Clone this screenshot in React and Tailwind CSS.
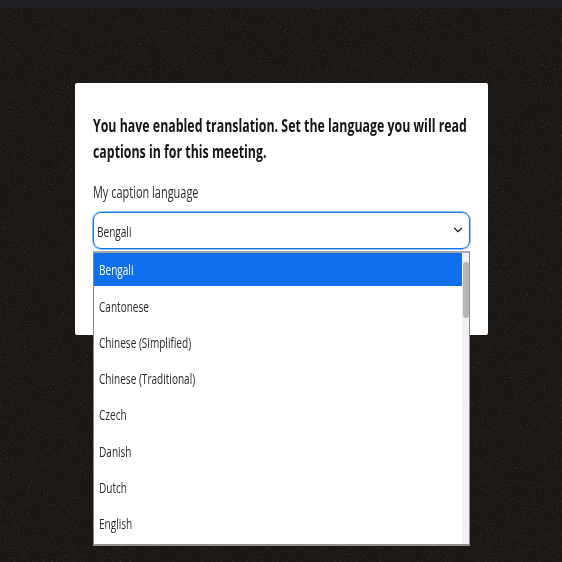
import React from "react";
import { ChevronDown } from "lucide-react";

const languages = [
  "Bengali",
  "Cantonese",
  "Chinese (Simplified)",
  "Chinese (Traditional)",
  "Czech",
  "Danish",
  "Dutch",
  "English",
];

const Squeezed = ({ children, className = "" }) => (
  <span className={`block origin-left whitespace-nowrap ${className}`}>{children}</span>
);

const App = () => {
  return (
    <div className="relative w-[562px] h-[562px] overflow-hidden bg-[#1b1714] font-['Open_Sans',sans-serif]">
      {/* background grain */}
      <svg className="absolute inset-0 w-full h-full opacity-20" xmlns="http://www.w3.org/2000/svg">
        <filter id="grain">
          <feTurbulence type="fractalNoise" baseFrequency="0.7" numOctaves="2" seed="11" />
          <feColorMatrix values="0 0 0 0 0.4  0 0 0 0 0.37  0 0 0 0 0.34  0 0 0 3 -1.75" />
        </filter>
        <rect width="562" height="562" filter="url(#grain)" />
      </svg>
      <div className="relative h-2 bg-[#1f2124]"></div>

      <div className="relative flex justify-center pt-[75px] pl-[1px]">
        <div className="relative w-[413px] h-[252px] bg-white rounded-[2px] pt-[29px] px-[18px]">
          <div className="text-[18px] leading-[26px] font-bold text-[#131619]">
            <Squeezed className="scale-x-[0.687]">You have enabled translation. Set the language you will read</Squeezed>
            <Squeezed className="scale-x-[0.687]">captions in for this meeting.</Squeezed>
          </div>
          <div className="mt-[17px] text-[16px] leading-[22px] text-[#2a2d31]">
            <Squeezed className="scale-x-[0.685]">My caption language</Squeezed>
          </div>
          <div className="mt-[9px] flex items-center justify-between w-[377px] h-[37px] rounded-[8px] border border-[#1a73e8] shadow-[0_0_0_1px_#8fc0f7] pl-[3px] pr-[4px] pt-[2px] text-[15px] text-[#23262a]">
            <Squeezed className="scale-x-[0.67]">Bengali</Squeezed>
            <ChevronDown size={14} strokeWidth={2} className="text-[#1b1d21] -mt-[3px]" />
          </div>

          {/* open option list */}
          <div className="absolute left-[18px] top-[168px] w-[377px] h-[295px] flex bg-white border border-[#8a8a8a] border-t-2 border-t-[#a8a8a8] border-b-2 border-b-[#8f8f8f]">
            <ul className="flex-1">
              {languages.map((lang, i) => (
                <li
                  key={lang}
                  className={`flex items-center pl-[5px] text-[15px] ${
                    i === 0 ? "h-[33px] mb-[2px] bg-[#0f6fec] text-white" : "h-[36.2px] text-[#262a2e]"
                  }`}
                >
                  <Squeezed className="scale-x-[0.67]">{lang}</Squeezed>
                </li>
              ))}
            </ul>
            <div className="w-[7px] bg-[#f1f1f5] pt-[9px] flex justify-center">
              <div className="w-[6px] h-[56px] rounded-[3px] bg-[#b4b4b8]"></div>
            </div>
          </div>
        </div>
      </div>
    </div>
  );
};

export default App;
